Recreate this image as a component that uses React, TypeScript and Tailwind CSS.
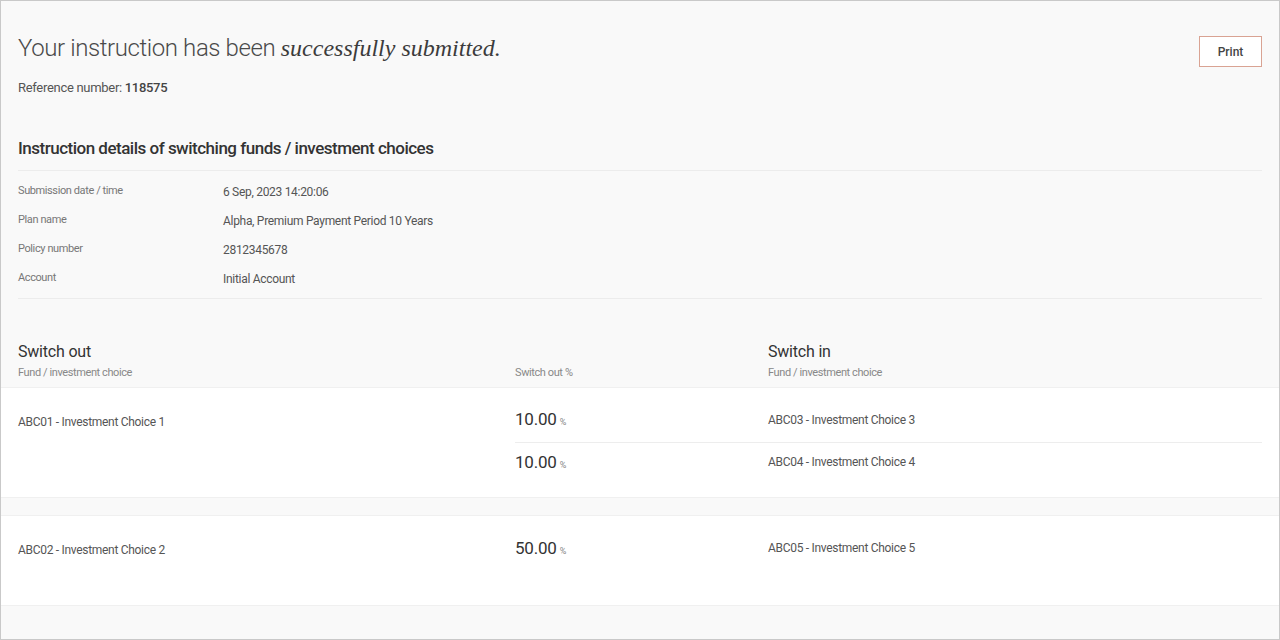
const sans = { fontFamily: '"Liberation Sans Narrow", "Roboto", "Liberation Sans", sans-serif' };

const details = [
  { label: "Submission date / time", value: "6 Sep, 2023 14:20:06" },
  { label: "Plan name", value: "Alpha, Premium Payment Period 10 Years" },
  { label: "Policy number", value: "2812345678" },
  { label: "Account", value: "Initial Account" },
];

function Pct({ v }: { v: string }) {
  return (
    <p className="text-[#333] text-[17px] leading-[22px] tracking-[-0.2px]">
      {v}
      <span className="text-[9px] text-[#888] ml-[3px]">%</span>
    </p>
  );
}

export default function App() {
  return (
    <div
      className="w-full h-[640px] bg-[#f9f9f9] border border-[#c9c9c9] overflow-hidden text-[#4a4a4a]"
      style={sans}
    >
      {/* Header */}
      <div className="flex justify-between px-[17px] pt-[32px]">
        <div>
          <h1 className="text-[24px] leading-[30px] font-light text-[#4a4a4a] tracking-[-0.4px]">
            Your instruction has been{" "}
            <em className="text-[#3c3c3c] tracking-normal" style={{ fontFamily: '"Liberation Serif", serif' }}>
              successfully submitted.
            </em>
          </h1>
          <p className="mt-[16px] text-[13px] leading-[18px] text-[#555] tracking-[-0.3px]">
            Reference number: <span className="font-medium text-[#444]">118575</span>
          </p>
        </div>
        <button className="mt-[3px] w-[63px] h-[31px] bg-white border border-[#d9a393] text-[12px] text-[#444] font-medium">
          Print
        </button>
      </div>

      {/* Instruction details */}
      <div className="px-[17px] mt-[40px]">
        <h2 className="text-[17px] leading-[22px] text-[#333] font-medium tracking-[-0.5px]">
          Instruction details of switching funds / investment choices
        </h2>
        <div className="mt-[11px] border-t border-b border-[#ececec] pt-[6px] pb-[5px]">
          {details.map((d) => (
            <div key={d.label} className="flex h-[29px] items-center">
              <span className="w-[205px] text-[11px] text-[#777] -mt-[1px] tracking-[-0.4px]">{d.label}</span>
              <span className="text-[12px] text-[#555] mt-[1px] tracking-[-0.3px]">{d.value}</span>
            </div>
          ))}
        </div>
      </div>

      {/* Switch table header */}
      <div className="flex px-[17px] mt-[43px] pb-[7px]">
        <div className="w-[497px]">
          <h3 className="text-[16px] leading-[20px] text-[#333] tracking-[-0.2px]">Switch out</h3>
          <p className="mt-[4px] text-[11px] leading-[14px] text-[#888] tracking-[-0.4px]">Fund / investment choice</p>
        </div>
        <div className="w-[253px] flex flex-col justify-end">
          <p className="text-[11px] leading-[14px] text-[#888] tracking-[-0.4px]">Switch out %</p>
        </div>
        <div>
          <h3 className="text-[16px] leading-[20px] text-[#333] tracking-[-0.2px]">Switch in</h3>
          <p className="mt-[4px] text-[11px] leading-[14px] text-[#888] tracking-[-0.4px]">Fund / investment choice</p>
        </div>
      </div>

      {/* Group 1 */}
      <div className="bg-white border-t border-b border-[#f0f0f0] flex px-[17px] pt-[11px] h-[111px]">
        <div className="w-[497px] h-[45px] flex items-center">
          <p className="text-[12px] text-[#555] tracking-[-0.3px]">ABC01 - Investment Choice 1</p>
        </div>
        <div className="flex-1">
          <div className="flex h-[44px] items-center border-b border-[#ededed]">
            <div className="w-[253px]">
              <Pct v="10.00" />
            </div>
            <p className="text-[12px] text-[#555] -mt-[2px] tracking-[-0.3px]">ABC03 - Investment Choice 3</p>
          </div>
          <div className="flex h-[40px] items-center">
            <div className="w-[253px]">
              <Pct v="10.00" />
            </div>
            <p className="text-[12px] text-[#555] -mt-[2px] tracking-[-0.3px]">ABC04 - Investment Choice 4</p>
          </div>
        </div>
      </div>

      {/* Group 2 */}
      <div className="mt-[17px] bg-white border-t border-b border-[#f0f0f0] flex px-[17px] pt-[21px] h-[91px]">
        <div className="w-[497px] h-[24px] flex items-center">
          <p className="text-[12px] text-[#555] mt-[2px] tracking-[-0.3px]">ABC02 - Investment Choice 2</p>
        </div>
        <div className="w-[253px] h-[24px] flex items-center">
          <Pct v="50.00" />
        </div>
        <div className="h-[24px] flex items-center">
          <p className="text-[12px] text-[#555] -mt-[2px] tracking-[-0.3px]">ABC05 - Investment Choice 5</p>
        </div>
      </div>
    </div>
  );
}
